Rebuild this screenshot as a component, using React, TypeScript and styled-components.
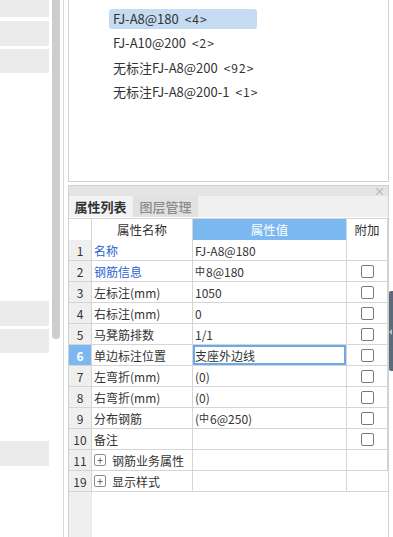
import React from "react";
import styled, { createGlobalStyle } from "styled-components";

const GlobalStyle = createGlobalStyle`
	html, body {
		margin: 0;
		padding: 0;
		background: #ffffff;
	}
	body {
		font-family: "Noto Sans CJK SC", "Noto Sans", sans-serif;
		font-size: 12px;
		color: #333333;
	}
`;

const Page = styled.div`
	position: relative;
	display: flex;
	width: 393px;
	height: 537px;
	overflow: hidden;
	background: #ffffff;
`;

const SideList = styled.div`
	width: 49px;
	padding-right: 3px;
	display: flex;
	flex-direction: column;
`;

interface BarProps {
	top: number;
	h: number;
}

const SideBar = styled.div<BarProps>`
	margin-top: ${(p) => p.top}px;
	height: ${(p) => p.h}px;
	background: #ebebeb;
`;

const ScrollTrack = styled.div`
	width: 8px;
	margin-right: 3px;
`;

const ScrollThumb = styled.div`
	height: 339px;
	background: #cdcdcd;
	border-radius: 0 0 4px 4px;
`;

const Divider = styled.div`
	width: 1px;
	background: #d9d9d9;
	margin-right: 4px;
`;

const RightPane = styled.div`
	width: 321px;
	display: flex;
	flex-direction: column;
	gap: 3px;
`;

const TreePanel = styled.div`
	height: 182px;
	box-sizing: border-box;
	border: 1px solid #d0d0d0;
	border-top: none;
	display: flex;
	flex-direction: column;
	align-items: flex-start;
	padding-left: 40px;
	overflow: hidden;
`;

const TreeParent = styled.div`
	margin-top: -17px;
	margin-left: -16px;
	height: 20px;
	line-height: 20px;
	font-size: 13px;
	color: #333;
`;

const TreeItem = styled.div<{ selected?: boolean }>`
	box-sizing: border-box;
	width: ${(p) => (p.selected ? "148px" : "auto")};
	height: 20px;
	line-height: 20px;
	padding: 0 4px;
	margin-top: ${(p) => (p.selected ? 6 : 4.3)}px;
	border-radius: 3px;
	background: ${(p) => (p.selected ? "#c5dbf2" : "transparent")};
	color: #333;
	font-size: 13px;
	white-space: nowrap;
	.cnt {
		margin-left: 6px;
		font-size: 12px;
		letter-spacing: 1px;
	}
`;

const PropPanel = styled.div`
	flex: 1;
	box-sizing: border-box;
	border: 1px solid #d0d0d0;
	border-bottom: none;
	display: flex;
	flex-direction: column;
`;

const CloseStrip = styled.div`
	height: 10px;
	background: #e4e4e4;
	display: flex;
	justify-content: flex-end;
	align-items: center;
	padding-right: 3px;
	color: #a9a9a9;
	font-size: 11px;
	line-height: 10px;
`;

const TabBar = styled.div`
	height: 21px;
	background: #f0f0f0;
	display: flex;
	gap: 1px;
	margin-bottom: 1px;
`;

const Tab = styled.div<{ active?: boolean }>`
	width: ${(p) => (p.active ? 63 : 65)}px;
	text-align: center;
	line-height: 21px;
	font-size: 13px;
	font-weight: ${(p) => (p.active ? 600 : 500)};
	color: ${(p) => (p.active ? "#333" : "#8a8a8a")};
	background: ${(p) => (p.active ? "#f3f3f3" : "#e1e1e1")};
`;

const Grid = styled.div`
	display: grid;
	grid-template-columns: 23px 101px 154px 1fr;
	grid-auto-rows: 21px;
	border-top: 1px solid #d5d5d5;
`;

interface CellProps {
	head?: boolean;
	num?: boolean;
	blue?: boolean;
	picked?: boolean;
	edit?: boolean;
	center?: boolean;
}

const Cell = styled.div<CellProps>`
	box-sizing: border-box;
	border-right: 1px solid #d5d5d5;
	border-bottom: 1px solid #d5d5d5;
	display: flex;
	align-items: center;
	justify-content: ${(p) => (p.center || p.num || p.head ? "center" : "flex-start")};
	padding-left: ${(p) => (p.center || p.num || p.head ? 0 : 2)}px;
	font-size: 12px;
	white-space: nowrap;
	overflow: hidden;
	color: ${(p) => (p.picked ? "#fff" : p.blue ? "#2c5fd6" : "#333")};
	background: ${(p) => (p.picked ? "#7cb8f0" : p.num ? "#efefef" : "#fff")};
	font-weight: ${(p) => (p.picked && p.num ? 700 : 400)};
	box-shadow: ${(p) => (p.edit ? "inset 0 0 0 2px #6aa9ea" : "none")};
	&:last-child {
		border-right: none;
	}
`;

const HeadCell = styled(Cell)`
	height: 22px;
	font-size: 12.5px;
`;

const Check = styled.div`
	width: 13px;
	height: 13px;
	box-sizing: border-box;
	border: 1px solid #7a7a7a;
	border-radius: 2px;
	background: #fff;
`;

const PlusBox = styled.span`
	width: 12px;
	height: 12px;
	box-sizing: border-box;
	border: 1px solid #8a8a8a;
	border-radius: 2px;
	display: inline-flex;
	align-items: center;
	justify-content: center;
	font-size: 11px;
	line-height: 1;
	color: #555;
	margin-right: 6px;
`;

const Bar = styled.span`
	font-size: 10px;
	vertical-align: 2px;
	margin-right: 1px;
`;

const Filler = styled.div`
	flex: 1;
	display: flex;
`;

const FillerNum = styled.div`
	width: 22px;
	background: #efefef;
	border-right: 1px solid #e6e6e6;
`;

const HandleTab = styled.div`
	position: absolute;
	right: 0;
	top: 291px;
	width: 4px;
	height: 80px;
	background: #5e6a77;
	border-radius: 2px 0 0 2px;
	&::after {
		content: "";
		position: absolute;
		left: 0;
		top: 38px;
		border-style: solid;
		border-width: 3px 3px 3px 0;
		border-color: transparent #b9c0c8 transparent transparent;
	}
`;

interface Row {
	n: string;
	name: React.ReactNode;
	value?: React.ReactNode;
	blue?: boolean;
	check?: boolean;
	group?: boolean;
}

const Rebar = (props: { rest: string; paren?: boolean }) => (
	<span>
		{props.paren ? "(" : ""}
		<Bar>中</Bar>
		{props.rest}
		{props.paren ? ")" : ""}
	</span>
);

const rows: Row[] = [
	{ n: "1", name: "名称", value: "FJ-A8@180", blue: true },
	{ n: "2", name: "钢筋信息", value: <Rebar rest="8@180" />, blue: true, check: true },
	{ n: "3", name: "左标注(mm)", value: "1050", check: true },
	{ n: "4", name: "右标注(mm)", value: "0", check: true },
	{ n: "5", name: "马凳筋排数", value: "1/1", check: true },
	{ n: "6", name: "单边标注位置", value: "支座外边线", check: true },
	{ n: "7", name: "左弯折(mm)", value: "(0)", check: true },
	{ n: "8", name: "右弯折(mm)", value: "(0)", check: true },
	{ n: "9", name: "分布钢筋", value: <Rebar rest="6@250" paren />, check: true },
	{ n: "10", name: "备注", value: "", check: true },
	{ n: "11", name: "钢筋业务属性", group: true },
	{ n: "19", name: "显示样式", group: true },
];

const treeItems = [
	{ label: "FJ-A8@180", count: "<4>" },
	{ label: "FJ-A10@200", count: "<2>" },
	{ label: "无标注FJ-A8@200", count: "<92>" },
	{ label: "无标注FJ-A8@200-1", count: "<1>" },
];

export default function App() {
	return (
		<Page>
			<GlobalStyle />
			<SideList>
				<SideBar top={0} h={17} />
				<SideBar top={4} h={25} />
				<SideBar top={3} h={24} />
				<SideBar top={228} h={25} />
				<SideBar top={3} h={24} />
				<SideBar top={88} h={25} />
			</SideList>
			<ScrollTrack>
				<ScrollThumb />
			</ScrollTrack>
			<Divider />
			<RightPane>
				<TreePanel>
					<TreeParent>钢筋</TreeParent>
					{treeItems.map((t, i) => (
						<TreeItem key={t.label} selected={i === 0}>
							{t.label}
							<span className="cnt">{t.count}</span>
						</TreeItem>
					))}
				</TreePanel>
				<PropPanel>
					<CloseStrip>×</CloseStrip>
					<TabBar>
						<Tab active>属性列表</Tab>
						<Tab>图层管理</Tab>
					</TabBar>
					<Grid>
						<HeadCell head />
						<HeadCell head>属性名称</HeadCell>
						<HeadCell head picked>属性值</HeadCell>
						<HeadCell head>附加</HeadCell>
						{rows.map((r) => (
							<React.Fragment key={r.n}>
								<Cell num picked={r.n === "6"}>
									{r.n}
								</Cell>
								<Cell blue={r.blue}>
									{r.group && <PlusBox>+</PlusBox>}
									{r.name}
								</Cell>
								<Cell edit={r.n === "6"}>{r.value}</Cell>
								<Cell center>{r.check && <Check />}</Cell>
							</React.Fragment>
						))}
					</Grid>
					<Filler>
						<FillerNum />
					</Filler>
				</PropPanel>
			</RightPane>
			<HandleTab />
		</Page>
	);
}
